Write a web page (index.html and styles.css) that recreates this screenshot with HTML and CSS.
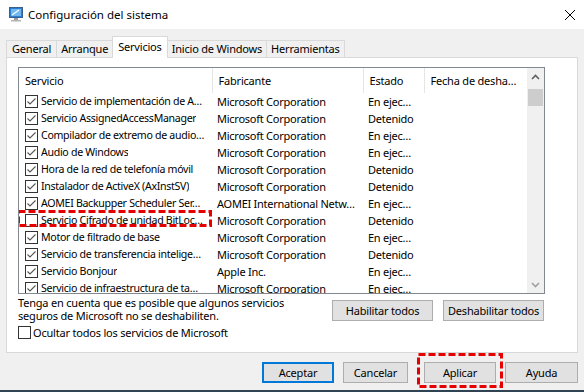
FILE: index.html
```html
<!DOCTYPE html>
<html lang="es">
<head>
    <meta charset="UTF-8">
    <title>Configuración del sistema</title>
    <link rel="stylesheet" href="styles.css">
</head>
<body>
    <div class="window">
        <div class="titlebar">
            <svg class="app-icon" width="16" height="16" viewBox="0 0 16 16">
                <rect x="1.5" y="1.5" width="13" height="10" fill="#2a7fd4" stroke="#3a5f8f"/>
                <rect x="3" y="3" width="10" height="7" fill="#6fb8f0"/>
                <path d="M4 9 L11 4" stroke="#fff" stroke-width="1.2"/>
                <rect x="6" y="12" width="4" height="2" fill="#9a9a9a"/>
                <rect x="3" y="14" width="10" height="1.5" fill="#b5b5b5"/>
            </svg>
            <span class="title">Configuración del sistema</span>
            <svg class="close" width="12" height="12" viewBox="0 0 12 12">
                <path d="M1 1 L11 11 M11 1 L1 11" stroke="#000" stroke-width="1"/>
            </svg>
        </div>

        <div class="content">
            <div class="tabs">
                <div class="tab">General</div>
                <div class="tab">Arranque</div>
                <div class="tab active">Servicios</div>
                <div class="tab">Inicio de Windows</div>
                <div class="tab">Herramientas</div>
            </div>

            <div class="panel">
                <div class="list">
                    <table class="services">
                        <colgroup>
                            <col class="c-name">
                            <col class="c-maker">
                            <col class="c-state">
                            <col class="c-date">
                        </colgroup>
                        <thead>
                            <tr>
                                <th>Servicio</th>
                                <th>Fabricante</th>
                                <th>Estado</th>
                                <th>Fecha de desha…</th>
                            </tr>
                        </thead>
                        <tbody>
                            <tr><td><span class="cb checked"></span><span class="name">Servicio de implementación de A…</span></td><td>Microsoft Corporation</td><td>En ejec…</td><td></td></tr>
                            <tr><td><span class="cb checked"></span><span class="name">Servicio AssignedAccessManager</span></td><td>Microsoft Corporation</td><td>Detenido</td><td></td></tr>
                            <tr><td><span class="cb checked"></span><span class="name">Compilador de extremo de audio…</span></td><td>Microsoft Corporation</td><td>En ejec…</td><td></td></tr>
                            <tr><td><span class="cb checked"></span><span class="name">Audio de Windows</span></td><td>Microsoft Corporation</td><td>En ejec…</td><td></td></tr>
                            <tr><td><span class="cb checked"></span><span class="name">Hora de la red de telefonía móvil</span></td><td>Microsoft Corporation</td><td>Detenido</td><td></td></tr>
                            <tr><td><span class="cb checked"></span><span class="name">Instalador de ActiveX (AxInstSV)</span></td><td>Microsoft Corporation</td><td>Detenido</td><td></td></tr>
                            <tr><td><span class="cb checked"></span><span class="name">AOMEI Backupper Scheduler Ser…</span></td><td>AOMEI International Netw…</td><td>En ejec…</td><td></td></tr>
                            <tr><td class="marked"><span class="cb"></span><span class="name">Servicio Cifrado de unidad BitLoc…</span><svg class="dash-box row-box" width="195" height="17" viewBox="0 0 195 17">
                                    <rect x="1.5" y="1.5" width="192" height="14" fill="none" stroke="#e60000" stroke-width="3" stroke-dasharray="7 3"/>
                                </svg></td><td>Microsoft Corporation</td><td>Detenido</td><td></td></tr>
                            <tr><td><span class="cb checked"></span><span class="name">Motor de filtrado de base</span></td><td>Microsoft Corporation</td><td>En ejec…</td><td></td></tr>
                            <tr><td><span class="cb checked"></span><span class="name">Servicio de transferencia intelige…</span></td><td>Microsoft Corporation</td><td>Detenido</td><td></td></tr>
                            <tr><td><span class="cb checked"></span><span class="name">Servicio Bonjour</span></td><td>Apple Inc.</td><td>En ejec…</td><td></td></tr>
                            <tr><td><span class="cb checked"></span><span class="name">Servicio de infraestructura de ta…</span></td><td>Microsoft Corporation</td><td>En ejec…</td><td></td></tr>
                        </tbody>
                    </table>
                    <div class="scrollbar">
                        <svg class="arrow" width="9" height="6" viewBox="0 0 9 6">
                            <path d="M1 5 L4.5 1.5 L8 5" fill="none" stroke="#606060" stroke-width="1.6"/>
                        </svg>
                        <div class="thumb"></div>
                        <div class="track"></div>
                        <svg class="arrow" width="9" height="6" viewBox="0 0 9 6">
                            <path d="M1 1 L4.5 4.5 L8 1" fill="none" stroke="#a0a0a0" stroke-width="1.6"/>
                        </svg>
                    </div>
                </div>

                <div class="below">
                    <div class="notes">
                        <p class="note">Tenga en cuenta que es posible que algunos servicios<br>seguros de Microsoft no se deshabiliten.</p>
                        <label class="hide-ms"><span class="cb"></span>Ocultar todos los servicios de Microsoft</label>
                    </div>
                    <div class="list-buttons">
                        <button class="btn wide">Habilitar todos</button>
                        <button class="btn wide">Deshabilitar todos</button>
                    </div>
                </div>
            </div>

            <div class="footer">
                <button class="btn default">Aceptar</button>
                <button class="btn cancel">Cancelar</button>
                <span class="highlight">
                    <button class="btn">Aplicar</button>
                    <svg class="dash-box btn-box" width="86" height="35" viewBox="0 0 86 35">
                        <rect x="1.5" y="1.5" width="83" height="32" fill="none" stroke="#e60000" stroke-width="3" stroke-dasharray="7 3"/>
                    </svg>
                </span>
                <button class="btn">Ayuda</button>
            </div>
        </div>
    </div>
</body>
</html>
```

FILE: styles.css
```css
* {
    box-sizing: border-box;
}
body {
    margin: 0;
    font-family: "Noto Sans", "Open Sans", sans-serif;
    font-size: 11px;
    letter-spacing: -0.2px;
    color: #000;
    background-color: #f0f0f0;
}
.window {
    width: 584px;
    height: 392px;
    display: flex;
    flex-direction: column;
    border-bottom: 2px solid #2f4352;
}
.titlebar {
    height: 29px;
    background-color: #fff;
    display: flex;
    align-items: center;
    padding: 0 8px;
}
.app-icon {
    margin-top: -1px;
}
.title {
    margin-left: 4px;
    font-size: 11.5px;
    letter-spacing: 0;
    flex: 1;
}
.content {
    flex: 1;
    padding: 7px 6px 0 6px;
}

/* tabs */
.tabs {
    display: flex;
    align-items: flex-end;
    height: 21px;
    position: relative;
    z-index: 1;
}
.tab {
    height: 17px;
    padding: 0 4px;
    border: 1px solid #d9d9d9;
    border-bottom: none;
    border-left: none;
    background-color: #f0f0f0;
    line-height: 15px;
    white-space: nowrap;
}
.tab:first-child {
    border-left: 1px solid #d9d9d9;
    padding: 0 5px;
}
.tab.active {
    height: 22px;
    margin-bottom: -1px;
    margin-left: -1px;
    padding: 0 5px;
    background-color: #fff;
    border-left: 1px solid #d9d9d9;
    line-height: 19px;
}

/* panel */
.panel {
    height: 296px;
    background-color: #fff;
    border: 1px solid #d9d9d9;
    padding: 9px 0 0 11px;
}
.list {
    width: 527px;
    height: 227px;
    border: 1px solid #828790;
    display: flex;
    overflow: hidden;
}
.services {
    border-collapse: collapse;
    table-layout: fixed;
    width: 508px;
    flex: none;
}
.c-name { width: 193px; }
.c-maker { width: 151px; }
.c-state { width: 61px; }
.c-date { width: 103px; }
.services th {
    height: 25px;
    font-weight: normal;
    text-align: left;
    padding: 0 0 1px 6px;
    border-right: 1px solid #e5e5e5;
    white-space: nowrap;
    overflow: hidden;
}
.services th:last-child {
    border-right: none;
}
.services td {
    height: 17px;
    padding: 0 0 0 5px;
    white-space: nowrap;
    overflow: hidden;
    text-overflow: ellipsis;
    line-height: 17px;
    letter-spacing: -0.25px;
}
.services td:first-child {
    padding-left: 6px;
}
.services td.marked {
    position: relative;
    overflow: visible;
}
.name {
    display: inline-block;
    max-width: 171px;
    overflow: hidden;
    text-overflow: ellipsis;
    vertical-align: top;
    font-size: 10.6px;
    letter-spacing: -0.3px;
}
.cb {
    display: inline-block;
    width: 13px;
    height: 13px;
    border: 1px solid #333;
    vertical-align: -3px;
    margin-right: 3px;
    background-color: #fff;
}
.services .cb {
    vertical-align: top;
    margin-top: 2px;
}
.cb.checked {
    background-image: url("data:image/svg+xml,%3Csvg xmlns='http://www.w3.org/2000/svg' width='11' height='11' viewBox='0 0 11 11'%3E%3Cpath d='M1.5 5.5 L4 8 L9.5 2.5' fill='none' stroke='%23555' stroke-width='1.1'/%3E%3C/svg%3E");
    background-repeat: no-repeat;
}
.dash-box {
    position: absolute;
    pointer-events: none;
}
.row-box {
    left: -2px;
    top: -2px;
}

/* scrollbar */
.scrollbar {
    width: 17px;
    background-color: #f0f0f0;
    display: flex;
    flex-direction: column;
    align-items: center;
}
.scrollbar .arrow {
    margin: 5px 0;
}
.scrollbar .arrow:first-child {
    margin-top: 6px;
}
.thumb {
    width: 15px;
    height: 17px;
    background-color: #cdcdcd;
    margin-top: 4px;
}
.track {
    flex: 1;
}

/* below list */
.below {
    display: flex;
    width: 527px;
    justify-content: space-between;
}
.note {
    margin: 2px 0 0 0;
    line-height: 13px;
}
.hide-ms {
    display: flex;
    align-items: center;
    margin-top: 3px;
}
.hide-ms .cb {
    margin-right: 2px;
}
.list-buttons {
    display: flex;
    gap: 10px;
    padding-top: 6px;
    padding-right: 1px;
}

/* buttons */
.btn {
    font-family: inherit;
    font-size: 11px;
    letter-spacing: inherit;
    height: 21px;
    width: 73px;
    background-color: #e1e1e1;
    border: 1px solid #adadad;
    padding: 0;
    color: #000;
    white-space: nowrap;
}
.btn.wide {
    width: 101px;
}
.btn.default {
    border: 2px solid #0078d7;
    width: 72px;
}
.btn.cancel {
    width: 65px;
    margin-right: 7px;
}
.footer {
    display: flex;
    justify-content: flex-end;
    gap: 9px;
    margin-top: 9px;
}
.highlight {
    position: relative;
    display: inline-block;
}
.highlight .btn {
    width: 72px;
}
.btn-box {
    left: -7px;
    top: -9px;
}
```
